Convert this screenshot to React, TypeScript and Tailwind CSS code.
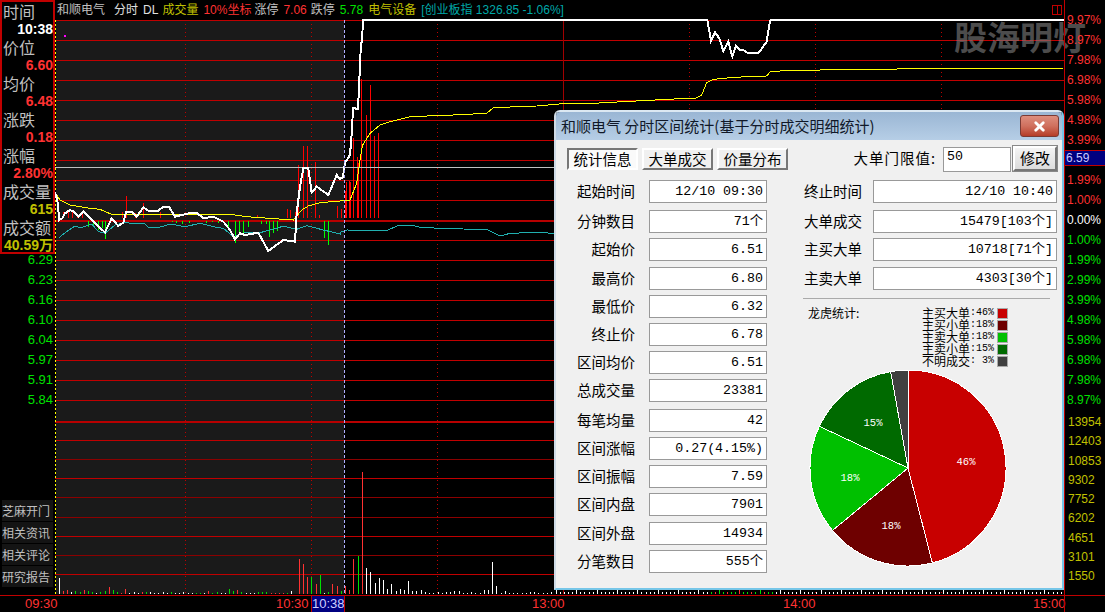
import { X } from "lucide-react";

const CJK = "font-['Noto_Sans_CJK_SC',sans-serif]";
const ARIAL = "font-['Liberation_Sans','Noto_Sans_CJK_SC',sans-serif]";
const MONO = "font-['Liberation_Mono','Noto_Sans_CJK_SC',monospace]";

// traced from the reference at 3x, so divide back down
const trace = (pts: number[], ox = 0) => {
  const out: string[] = [];
  for (let i = 0; i < pts.length; i += 2) {
    out.push(`${ox + pts[i] / 3},${pts[i + 1] / 3}`);
  }
  return out.join(" ");
};

const priceLine = [
  trace([165,578,172,600,178,660,187,655,195,640,210,630,222,635,235,650,250,635,265,650,285,670,315,697,335,655,355,678,370,668,378,635,395,635,410,650,430,622,445,632,475,632,490,620,508,622,525,650,545,645,575,638,590,638,610,655,640,650,670,665,690,690,705,718,720,700,735,705,775,698,805,753,850,720,885,725,890,640,900,560,910,505,925,505,935,578,950,560,985,585,1010,525,1020,537]),
  "340,179 343,177 345,163 350,155 352,130 353,108 358,109 359,88 360,65 361,43 362,42 363,20 707,20",
  trace([82,60,93,122,105,97,118,115,130,153,145,125,157,170,168,137,180,150,190,150,205,160,235,160,260,125,268,75,272,60,1150,60], 680),
].join(" ");

const avgLine = [
  trace([165,578,180,600,210,615,270,625,300,628,335,643,690,643,740,650,880,660,905,630,925,618,960,608,1020,603]),
  trace([0,602,30,600,50,550,60,480,66,445,68,435,90,400,120,375,150,365,210,350,340,345,440,340,460,323,590,318,680,310,720,312], 340),
  trace([0,296,45,295,65,285,80,248,100,238,160,232,260,228,272,214,360,211,540,208,880,205,1150,204], 680),
].join(" ");

const indexLine = [
  trace([178,712,200,695,222,680,245,682,275,672,295,695,315,700,345,675,375,668,400,670,435,672,445,683,475,683,510,672,555,680,600,670,640,680,670,685,700,710,735,698,780,698,830,685,850,678,890,688,920,677,970,690,1020,702]),
  trace([0,697,20,690,140,692,175,676,225,678,245,683,320,685,445,690,480,708,510,700,590,697,642,700], 340),
].join(" ");

const redBars = [
  [126,196],[63,212],[68,210],[72,212],[77,215],[82,213],[122,212],[135,213],[143,203],[160,212],[257,215],[252,217],[287,209],[290,210],[295,212],[298,165],[303,146],[307,146],[315,162],[319,215],[337,206],[341,209],[346,182],[350,182],[353,138],[358,163],[345,191],[349,181],[357,157],[361,79],[366,115],[370,85],[374,136],[378,133],
];
const greenBars = [
  [88,227],[93,227],[98,230],[102,228],[105,239],[172,222],[176,223],[182,224],[189,223],[206,223],[212,222],[218,223],[228,228],[235,243],[239,232],[243,233],[248,227],[261,224],[266,224],[269,237],[273,233],[277,231],[283,221],[324,238],[328,245],
];

const colours: Record<string, string> = { r: "#ff3232", g: "#00e000", w: "#ffffff" };
const smallVol = "r3 r4 w2 g3 g2 r4 g3 g2 w1 g2 g3 r7 g4 g2 r1 r5 w1 w2 w1 r2 g2 w2 w1 w1 w2 w1 g2 w1 w1 w2 w1 w1 g1 g1 w1 r3 g1 g2 w1 w1 g5 g3 r4 g2 w1 w1 w1 g2 g2 g2 r1 r1 r1 r1 g1 w3".split(" ");
const bigVol: [number, number, string][] = [
  [59,16,"w"],[299,35,"r"],[303,30,"r"],[307,17,"r"],[311,17,"g"],[316,10,"r"],[320,19,"g"],[324,1,"w"],[328,2,"g"],[332,10,"r"],[337,8,"r"],[341,3,"g"],[345,8,"r"],[349,4,"r"],[353,35,"r"],[358,38,"g"],[362,122,"r"],[366,26,"w"],[370,22,"w"],[375,11,"w"],[379,16,"w"],[383,14,"w"],[387,5,"w"],[391,10,"w"],[396,3,"w"],[400,5,"w"],[404,4,"w"],[408,13,"w"],[412,3,"w"],[416,3,"w"],[421,4,"w"],[425,2,"w"],[429,1,"w"],[433,1,"w"],[438,2,"w"],[442,1,"w"],[446,2,"w"],[450,2,"w"],[454,3,"w"],[459,3,"w"],[463,1,"w"],[467,1,"w"],[471,2,"w"],[475,1,"w"],[480,1,"w"],[484,4,"w"],[488,4,"w"],[492,32,"w"],[496,8,"w"],[501,1,"w"],[505,3,"w"],[509,1,"w"],[513,1,"w"],[517,1,"w"],[522,1,"w"],[526,1,"w"],[530,2,"w"],[534,2,"w"],[538,1,"w"],[543,1,"w"],[547,1,"w"],[551,2,"w"],
];
const bottomTicks = Array.from({ length: 125 }, (_, i) => 556 + i * 4.07);

const gridLines: [number, string, number][] = [
  ...[20,40,60,80,100,120,140,160,180,200,240,260,280,300,320,340,360,380,400,440,478,536,574].map(
    (y) => [y, "#c00000", 1] as [number, string, number],
  ),
  [220, "#b80000", 2],
  [421, "#b80000", 2],
  [459, "#8c0000", 1],
  [497, "#8c0000", 1],
  [517, "#8c0000", 1],
  [555, "#8c0000", 1],
];

const sidebar = [
  ["时间", "10:38", "text-white"],
  ["价位", "6.60", "text-[#ff3232]"],
  ["均价", "6.48", "text-[#ff3232]"],
  ["涨跌", "0.18", "text-[#ff3232]"],
  ["涨幅", "2.80%", "text-[#ff3232]"],
  ["成交量", "615", "text-[#c0c000]"],
  ["成交额", "40.59万", "text-[#c0c000]"],
];

const leftPrices = ["6.29", "6.23", "6.16", "6.10", "6.04", "5.97", "5.91", "5.84"];
const upPct = ["9.97%", "8.97%", "7.98%", "6.98%", "5.98%", "4.98%", "3.99%"];
const lowPct = ["1.99%", "1.00%"];
const downPct = ["1.00%", "1.99%", "2.99%", "3.99%", "4.98%", "5.98%", "6.98%", "7.98%", "8.97%"];
const volumes = ["13954", "12403", "10853", "9302", "7752", "6202", "4651", "3101", "1550"];

const leftRows = [
  ["起始时间", "12/10 09:30", "mt-0"],
  ["分钟数目", "71个", "mt-[7px]"],
  ["起始价", "6.51", "mt-[5px]"],
  ["最高价", "6.80", "mt-[6px]"],
  ["最低价", "6.32", "mt-[5px]"],
  ["终止价", "6.78", "mt-[5px]"],
  ["区间均价", "6.51", "mt-[5px]"],
  ["总成交量", "23381", "mt-[5px]"],
  ["每笔均量", "42", "mt-[7px]"],
  ["区间涨幅", "0.27(4.15%)", "mt-[5px]"],
  ["区间振幅", "7.59", "mt-[5px]"],
  ["区间内盘", "7901", "mt-[5px]"],
  ["区间外盘", "14934", "mt-[6px]"],
  ["分笔数目", "555个", "mt-[5px]"],
];
const rightRows = [
  ["终止时间", "12/10 10:40", "mt-0"],
  ["大单成交", "15479[103个]", "mt-[7px]"],
  ["主买大单", "10718[71个]", "mt-[5px]"],
  ["主卖大单", "4303[30个]", "mt-[6px]"],
];

const legend = [
  ["主买大单", ":46%", "bg-[#c80000]"],
  ["主买小单", ":18%", "bg-[#6e0000]"],
  ["主卖大单", ":18%", "bg-[#00c000]"],
  ["主卖小单", ":15%", "bg-[#006a00]"],
  ["不明成交", ": 3%", "bg-[#404040]"],
];

const slices = [
  [0, 165.6, "#c80000"],
  [165.6, 230.4, "#6e0000"],
  [230.4, 295.2, "#00c000"],
  [295.2, 349.8, "#006a00"],
  [349.8, 360, "#404040"],
] as const;

function slicePath(from: number, to: number) {
  const r = 98;
  const at = (a: number) => {
    const rad = (a * Math.PI) / 180;
    return `${r + 1 + r * Math.sin(rad)} ${r + 1 - r * Math.cos(rad)}`;
  };
  return `M${r + 1} ${r + 1} L${at(from)} A${r} ${r} 0 ${to - from > 180 ? 1 : 0} 1 ${at(to)} Z`;
}

function Chart() {
  return (
    <svg viewBox="55 19 1009 576" className="block w-full flex-1" shapeRendering="crispEdges">
      <rect x="56" y="20" width="288" height="574" fill="#1a1a1a" />
      {gridLines.map(([y, c, w]) => (
        <rect key={y} x="55" y={y} width="1009" height={w} fill={c} />
      ))}
      {[185, 311, 437, 689, 815, 941].map((x) => (
        <line key={x} x1={x + 0.5} y1="20" x2={x + 0.5} y2="594" stroke="#c00000" strokeDasharray="1 3" />
      ))}
      <rect x="563" y="20" width="1" height="574" fill="#a00000" />
      <line x1="55.5" y1="20" x2="55.5" y2="594" stroke="#ffff00" strokeDasharray="2 2" />
      {redBars.map(([x, y]) => (
        <rect key={`r${x}-${y}`} x={x} y={y} width="1" height={218 - y} fill="#ff0000" />
      ))}
      {greenBars.map(([x, y]) => (
        <rect key={`g${x}`} x={x} y="221" width="1" height={y - 221} fill="#00ff00" />
      ))}
      <rect x="55" y="167" width="1009" height="1" fill="#c0c0c0" />
      <polyline points={indexLine} fill="none" stroke="#20b0b0" strokeWidth="1" />
      <polyline points={avgLine} fill="none" stroke="#ffff00" strokeWidth="1" />
      <polyline points={priceLine} fill="none" stroke="#ffffff" strokeWidth="2" />
      <rect x="772" y="19" width="292" height="2" fill="#ffffff" />
      <rect x="64" y="35" width="2" height="2" fill="#ff00ff" />
      <line x1="344.5" y1="20" x2="344.5" y2="594" stroke="#b0b0ff" strokeDasharray="3 2" />
      {smallVol.map((t, i) => {
        const h = Number(t.slice(1));
        return <rect key={i} x={Math.round(63 + i * 4.15)} y={594 - h} width="1" height={h} fill={colours[t[0]]} />;
      })}
      {bigVol.map(([x, h, c]) => (
        <rect key={x} x={x} y={594 - h} width="1" height={h} fill={colours[c]} />
      ))}
      {bottomTicks.map((x, i) => {
        const tall = i % 5 === 0;
        const tinted = x > 708 && x < 772;
        return (
          <rect
            key={x}
            x={Math.round(x)}
            y={tall ? 590 : 592}
            width="1"
            height={tall ? 4 : 2}
            fill={tinted ? (i % 3 === 0 ? "#ff3232" : "#00e000") : "#ffffff"}
          />
        );
      })}
    </svg>
  );
}

function Field({ value, className = "" }: { value: string; className?: string }) {
  return (
    <div className={`flex h-[23px] items-center justify-end border border-[#999] bg-white pr-[3px] text-[13.3px] text-black ${MONO} ${className}`}>
      {value}
    </div>
  );
}

function StatRow({ label, value, className, labelWidth, fieldWidth }: { label: string; value: string; className: string; labelWidth: string; fieldWidth: string }) {
  return (
    <div className={`flex items-center ${className}`}>
      <div className={`${labelWidth} shrink-0 text-right text-[14.5px] leading-none text-black ${CJK}`}>{label}</div>
      <Field value={value} className={fieldWidth} />
    </div>
  );
}

function Tab({ label, active }: { label: string; active?: boolean }) {
  return (
    <div
      className={`flex h-[22px] w-[71px] items-center justify-center border-2 text-[14.5px] text-black ${CJK} ${
        active ? "border-t-[#777] border-l-[#777] border-r-white border-b-white bg-[#fafafa]" : "border-t-[#fff] border-l-[#fff] border-r-[#777] border-b-[#777] bg-[#f0f0f0]"
      }`}
    >
      {label}
    </div>
  );
}

function Pie() {
  return (
    <svg width="198" height="198" viewBox="0 0 198 198" className="block">
      {slices.map(([from, to, fill]) => (
        <path key={from} d={slicePath(from, to)} fill={fill} stroke="#ffffff" strokeWidth="1" shapeRendering="crispEdges" />
      ))}
      <g fill="#ffffff" fontSize="10.5" fontFamily="Liberation Mono" textAnchor="middle">
        <text x="157" y="96">46%</text>
        <text x="82" y="160">18%</text>
        <text x="41" y="112">18%</text>
        <text x="64" y="57">15%</text>
      </g>
    </svg>
  );
}

function StatsDialog() {
  return (
    <div className="absolute left-[554px] top-[110px] flex h-[480px] w-[510px] flex-col rounded-t-[6px] border-2 border-[#76c6e8] border-t-[#dce8f2] border-l-[#cfdbe6]">
      <div className="flex h-[28px] shrink-0 items-center justify-between rounded-t-[4px] bg-gradient-to-b from-[#9ab6d4] to-[#b6cee6] pl-[5px] pr-[3px]">
        <span className={`text-[15px] text-[#101828] ${CJK}`}>和顺电气 分时区间统计(基于分时成交明细统计)</span>
        <div className="flex h-[22px] w-[39px] items-center justify-center rounded-[3px] border border-[#7a3a34] bg-gradient-to-b from-[#dd8e7e] via-[#d0705e] to-[#b53c28]">
          <X className="h-[15px] w-[15px] text-white" strokeWidth={4.5} />
        </div>
      </div>
      <div className="flex flex-1 gap-[10px] bg-[#f0f0f0] pt-[8px]">
        <div className="ml-[11px] w-[224px] shrink-0">
          <div className="flex gap-[4px]">
            <Tab label="统计信息" active />
            <Tab label="大单成交" />
            <Tab label="价量分布" />
          </div>
          <div className="mt-[10px]">
            {leftRows.map(([label, value, cls]) => (
              <StatRow key={label} label={label} value={value} className={cls} labelWidth="w-[68px] mr-[14px]" fieldWidth="w-[118px]" />
            ))}
          </div>
        </div>
        <div className="ml-[1px] w-[255px] shrink-0">
          <div className="-mt-[3px] flex h-[26px] items-center justify-end">
            <span className={`mr-[7px] text-[14.5px] tracking-[1px] text-black ${CJK}`}>大单门限值:</span>
            <div className={`mt-[3px] flex h-[25px] w-[68px] items-start border border-[#999] bg-white pl-[3px] pt-[2px] text-[13.3px] leading-[14px] text-black ${MONO}`}>50</div>
            <div className={`ml-[2px] flex h-[25px] w-[44px] items-center justify-center border-2 border-t-white border-l-white border-r-[#777] border-b-[#777] bg-gradient-to-b from-[#f4f4f4] to-[#dcdcdc] text-[15px] text-black outline outline-1 outline-[#888] ${CJK}`}>修改</div>
          </div>
          <div className="mt-[9px]">
            {rightRows.map(([label, value, cls]) => (
              <StatRow key={label} label={label} value={value} className={cls} labelWidth="w-[60px] mr-[11px]" fieldWidth="w-[184px]" />
            ))}
          </div>
          <div className="ml-px mt-[8px] h-px w-[247px] bg-[#aaa]" />
          <div className="flex">
            <span className={`ml-[6px] mt-[6px] w-[114px] text-[12px] leading-[16px] text-black ${CJK}`}>龙虎统计:</span>
            <div className="mt-[8px]">
              {legend.map(([name, pct, swatch]) => (
                <div key={name} className="flex h-[12px] items-center whitespace-pre leading-none text-black">
                  <span className={`text-[12px] ${CJK}`}>{name}</span>
                  <span className={`w-[27px] text-[10px] ${MONO}`}>{pct}</span>
                  <span className={`h-[11px] w-[11px] border border-[#aaa] ${swatch}`} />
                </div>
              ))}
            </div>
          </div>
          <div className="ml-[7px] mt-[2px]">
            <Pie />
          </div>
        </div>
      </div>
    </div>
  );
}

export default function App() {
  return (
    <div className={`relative flex h-[612px] w-[1105px] flex-col overflow-hidden bg-black ${ARIAL}`}>
      <div className="flex h-[595px]">
        <div className="flex w-[55px] shrink-0 flex-col">
          <div className="h-[254px] border-2 border-[#c00000]">
            {sidebar.map(([label, value, colour]) => (
              <div key={label}>
                <div className={`h-[18px] pl-px text-[16px] leading-[18px] text-[#c0c0c0] ${CJK}`}>{label}</div>
                <div className={`h-[18px] text-right text-[14px] font-bold leading-[18px] ${colour}`}>{value}</div>
              </div>
            ))}
          </div>
          <div className="-mt-[4px]">
            {leftPrices.map((p) => (
              <div key={p} className="h-[20px] pr-[2px] text-right text-[13px] leading-[20px] text-[#00e000]">{p}</div>
            ))}
          </div>
          <div className={`mt-auto flex flex-col gap-px pb-[8px] pl-[2px] pr-[2px] text-[12px] text-[#c0c0c0] ${CJK}`}>
            {["芝麻开门", "相关资讯", "相关评论", "研究报告"].map((t) => (
              <div key={t} className="flex h-[21px] items-center bg-[#141414]">{t}</div>
            ))}
          </div>
        </div>
        <div className="flex min-w-0 flex-1 flex-col">
          <div className={`flex h-[19px] items-center whitespace-nowrap pl-[2px] text-[12px] leading-none ${ARIAL}`}>
            <span className="text-[#c0c0c0]">和顺电气</span>
            <span className="ml-[9px] text-[#e0e0e0]">分时</span>
            <span className="ml-[5px] text-[#e0e0e0]">DL</span>
            <span className="ml-[4px] text-[#c0c000]">成交量</span>
            <span className="ml-[5px] text-[#ff3232]">10%坐标</span>
            <span className="ml-[3px] text-[#c0c0c0]">涨停</span>
            <span className="ml-[5px] text-[#ff3232]">7.06</span>
            <span className="ml-[4px] text-[#c0c0c0]">跌停</span>
            <span className="ml-[5px] text-[#00e000]">5.78</span>
            <span className="ml-[5px] text-[#c0c000]">电气设备</span>
            <span className="ml-[5px] text-[#00a8a8]">[创业板指 1326.85 -1.06%]</span>
          </div>
          <Chart />
        </div>
        <div className="relative z-10 w-[41px] shrink-0 border-l border-[#c00000] pt-[10px] text-[12px] leading-[20px]">
          {upPct.map((p) => (
            <div key={p} className="h-[20px] pl-[2px] text-[#ff3232]">{p}</div>
          ))}
          <div className="flex h-[16px] items-center border-y border-[#c00000] bg-[#000080] pl-px text-[#c8c8ff]">6.59</div>
          <div className="h-[4px]" />
          {lowPct.map((p) => (
            <div key={p} className="h-[20px] pl-[2px] text-[#ff3232]">{p}</div>
          ))}
          <div className="h-[20px] pl-[2px] text-white">0.00%</div>
          {downPct.map((p) => (
            <div key={p} className="h-[20px] pl-[2px] text-[#00e000]">{p}</div>
          ))}
          <div className="h-[2px]" />
          {volumes.map((v) => (
            <div key={v} className="h-[19.3px] pl-[3px] text-[#c0c000]">{v}</div>
          ))}
        </div>
      </div>
      <div className="relative flex h-[17px] border-t border-[#c00000] text-[13px] leading-[15px] text-[#ff3232]">
        <span className="ml-[25px] w-[251px]">09:30</span>
        <span className="w-[35px]">10:30</span>
        <span className="w-[34px] border-x border-[#c00000] bg-[#000080] text-center text-[#d0d0ff]">10:38</span>
        <span className="ml-[187px] w-[251px]">13:00</span>
        <span className="w-[250px]">14:00</span>
        <span className="w-[31px]">15:00</span>
        <span className="border-l border-[#c00000]" />
      </div>
      <StatsDialog />
      <div className={`pointer-events-none absolute left-[954px] top-[14px] text-[33px] font-bold leading-[44px] text-[#808080]/60 ${CJK}`}>股海明灯</div>
      <div className="absolute left-[1052px] top-[5px] flex h-[10px] w-[10px] border border-[#c00000]">
        <div className="mx-auto h-full w-px bg-[#c00000]" />
      </div>
    </div>
  );
}
